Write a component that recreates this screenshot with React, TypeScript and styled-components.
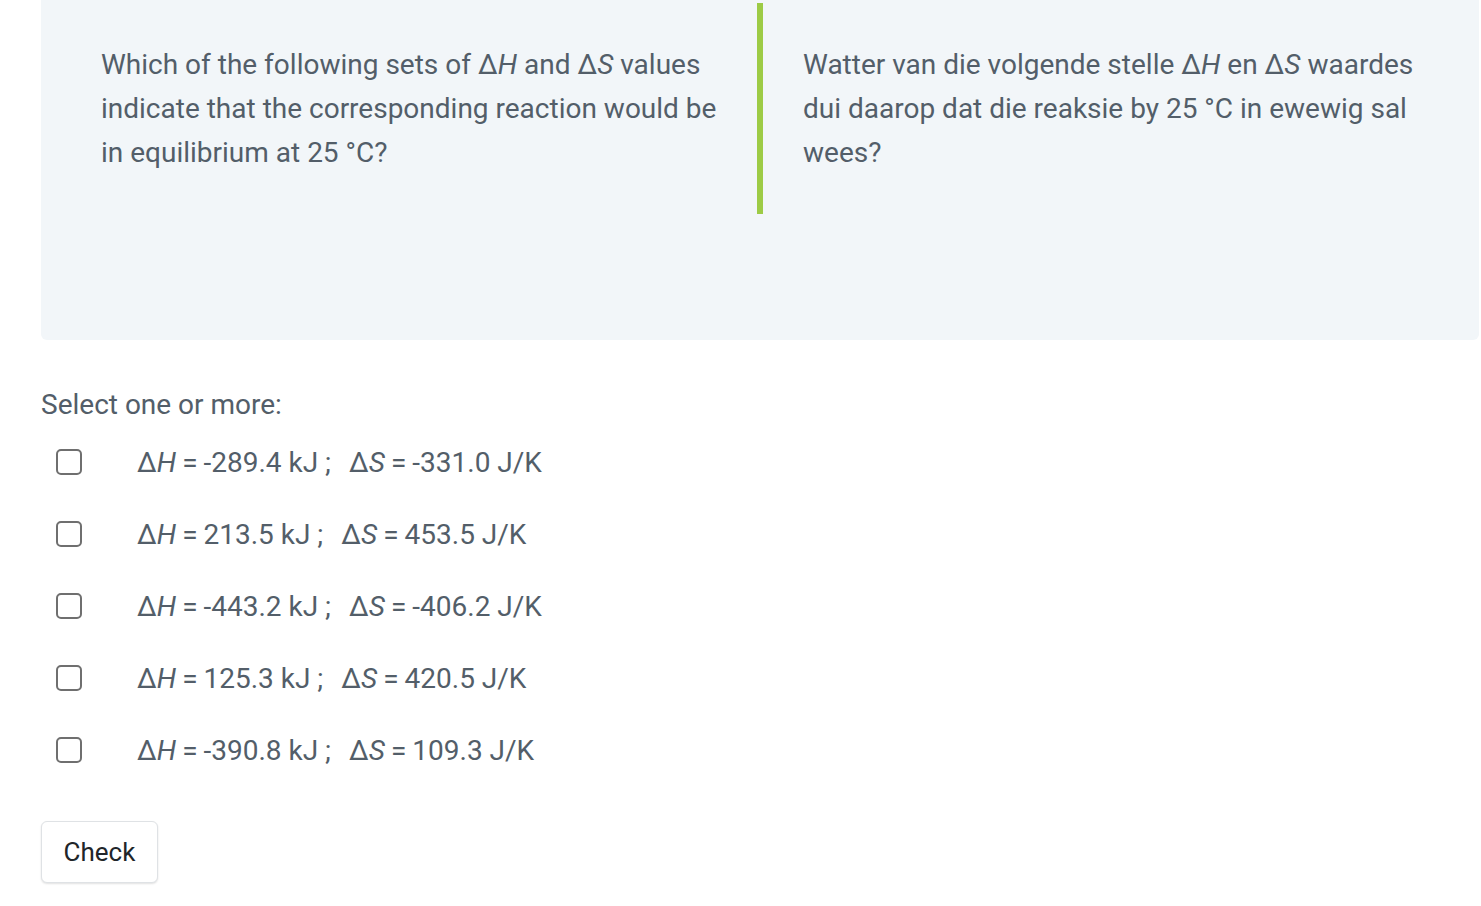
import React from "react";
import styled, { createGlobalStyle } from "styled-components";

const GlobalStyle = createGlobalStyle`
  html, body { margin: 0; padding: 0; background: #ffffff; }
  body { font-family: Roboto, "Liberation Sans", Arial, sans-serif; }
`;

const Page = styled.div`
  padding: 0 2px 40px 41px;
`;

const QuestionBox = styled.div`
  background: #f2f6f9;
  border-radius: 0 0 6px 6px;
  padding: 3px 0 126px 0;
`;

const Columns = styled.div`
  display: grid;
  grid-template-columns: 716px 1fr;
`;

const Cell = styled.div<{ $side: "left" | "right" }>`
  font-size: 28px;
  line-height: 44px;
  color: #535e69;
  padding: ${(p) => (p.$side === "left" ? "40px 30px 39px 60px" : "40px 40px 39px 40px")};
  border-left: ${(p) => (p.$side === "right" ? "6px solid #9dcb46" : "none")};
`;

const Ital = styled.span`
  font-style: italic;
`;

const Prompt = styled.div`
  margin-top: 45px;
  font-size: 28px;
  line-height: 40px;
  color: #535e69;
`;

const OptionList = styled.div`
  margin-top: 1px;
  display: flex;
  flex-direction: column;
`;

const OptionRow = styled.label`
  display: flex;
  align-items: center;
  height: 72px;
  padding-left: 15px;
  gap: 55px;
  cursor: pointer;
`;

const Box = styled.span`
  width: 26px;
  height: 26px;
  box-sizing: border-box;
  border: 2px solid #6f6f6f;
  border-radius: 5px;
  background: #fff;
  flex: none;
`;

const OptionText = styled.span`
  font-size: 28px;
  color: #535e69;
  white-space: pre;
`;

const Eq = styled.span`
  margin: 0 6px;
`;

const Gap = styled.span`
  display: inline-block;
  width: 18px;
`;

const CheckButton = styled.button`
  margin-top: 35px;
  font-family: Roboto, "Liberation Sans", Arial, sans-serif;
  font-size: 26px;
  line-height: 38px;
  color: #212529;
  background: #ffffff;
  border: 1px solid #dfe2e5;
  border-radius: 6px;
  padding: 11px 21.5px;
  box-shadow: 0 1px 2px rgba(0, 0, 0, 0.12);
  cursor: pointer;
`;

const D = (v: string) => (
  <>
    Δ<Ital>{v}</Ital>
  </>
);

const options: [string, string][] = [
  ["-289.4", "-331.0"],
  ["213.5", "453.5"],
  ["-443.2", "-406.2"],
  ["125.3", "420.5"],
  ["-390.8", "109.3"],
];

export default function App() {
  return (
    <>
      <GlobalStyle />
      <Page>
        <QuestionBox>
          <Columns>
            <Cell $side="left">
              Which of the following sets of {D("H")}&nbsp;and {D("S")}&nbsp;values indicate that the
              corresponding reaction would be in equilibrium at 25 °C?
            </Cell>
            <Cell $side="right">
              Watter van die volgende stelle {D("H")}&nbsp;en {D("S")}&nbsp;waardes dui daarop dat die
              reaksie by 25 °C in ewewig sal wees?
            </Cell>
          </Columns>
        </QuestionBox>
        <Prompt>Select one or more:</Prompt>
        <OptionList>
          {options.map(([h, s], i) => (
            <OptionRow key={i}>
              <Box />
              <OptionText>
                {D("H")}
                <Eq>=</Eq>
                {h} kJ ;<Gap />
                {D("S")}
                <Eq>=</Eq>
                {s} J/K
              </OptionText>
            </OptionRow>
          ))}
        </OptionList>
        <CheckButton>Check</CheckButton>
      </Page>
    </>
  );
}
